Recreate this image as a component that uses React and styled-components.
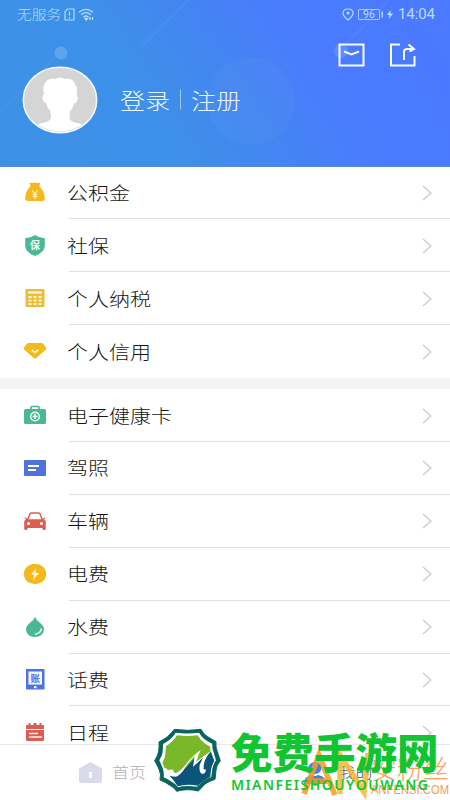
import React from 'react';
import styled, { createGlobalStyle } from 'styled-components';

const GlobalStyle = createGlobalStyle`
  * {
    box-sizing: border-box;
  }
  body {
    margin: 0;
    background: #ffffff;
    font-family: 'Noto Sans CJK SC', 'Noto Sans', sans-serif;
  }
  svg {
    display: block;
    flex: none;
  }
`;

const Screen = styled.div`
  position: relative;
  display: flex;
  flex-direction: column;
  width: 450px;
  height: 800px;
  overflow: hidden;
  background: #ffffff;
`;

const Header = styled.header`
  position: relative;
  flex: none;
  height: 166.5px;
  border-bottom: 1px solid #5688d8;
  background: linear-gradient(58deg, #3c91e5 0%, #3e90e8 34%, #4484f3 53%, #4a7bfe 70%, #4b79ff 100%);
`;

const HeaderArt = styled.svg`
  position: absolute;
  top: 0;
  left: 0;
`;

const StatusBar = styled.div`
  position: relative;
  display: flex;
  align-items: center;
  justify-content: space-between;
  height: 28px;
  padding: 0 14px 0 17px;
  color: #b9dcfa;
`;

const StatusGroup = styled.div`
  display: flex;
  align-items: center;
  gap: ${({ gap }) => gap}px;
`;

const Carrier = styled.span`
  font-size: 14.8px;
  font-weight: 300;
  line-height: 20px;
  transform: scaleY(0.88);
`;

const Battery = styled.span`
  width: 22px;
  height: 11px;
  border: 1px solid #a9c4fb;
  border-radius: 1px;
  font: 10.5px/9px Roboto, sans-serif;
  text-align: center;
`;

const Clock = styled.span`
  width: 38px;
  font: 15px/18px Roboto, sans-serif;
  letter-spacing: -0.1px;
`;

const Actions = styled.div`
  position: relative;
  display: flex;
  justify-content: flex-end;
  gap: 24px;
  padding: 15px 34px 0 0;
`;

const Profile = styled.div`
  position: relative;
  display: flex;
  align-items: center;
  margin-top: -1px;
  padding-left: 22px;
`;

const Account = styled.div`
  display: flex;
  align-items: center;
  margin: -2px 0 0 22px;
  color: #ecf8ff;
  font-size: 25px;
  font-weight: 300;
  line-height: 30px;
  transform: scaleY(0.88);
`;

const AccountDivider = styled.i`
  width: 1px;
  height: 23px;
  margin: 0 10px;
  background: #9bc7f8;
`;

const List = styled.main`
  flex: 1;
  min-height: 0;
  overflow: hidden;
  background: #f3f3f4;
`;

const Group = styled.section`
  margin-bottom: 11px;
  background: #ffffff;
`;

const Row = styled.div`
  display: flex;
  height: 52.9px;
`;

const RowIcon = styled.div`
  display: flex;
  align-items: center;
  justify-content: center;
  width: 69px;
`;

const RowBody = styled.div`
  flex: 1;
  display: flex;
  align-items: center;
  justify-content: space-between;
  padding-right: 17px;
  background: ${({ $last }) =>
    $last ? 'none' : 'linear-gradient(#dfdfe2, #dfdfe2) 0 100% / 100% 1px no-repeat'};
`;

const RowLabel = styled.span`
  margin: -2px 0 0 -2px;
  color: #161616;
  font-size: 21px;
  font-weight: 300;
  line-height: 28px;
  transform: scaleY(0.89);
`;

const TabBar = styled.nav`
  display: grid;
  grid-template-columns: 1fr 1fr;
  flex: none;
  height: 56px;
  border-top: 1px solid #e7e7ea;
  background: #ffffff;
`;

const Tab = styled.div`
  display: flex;
  align-items: center;
  justify-content: center;
  gap: ${({ $active }) => ($active ? 12 : 10)}px;
  color: ${({ $active }) => ($active ? '#3f5680' : '#b1b1b6')};
  font-size: 17px;
  font-weight: 300;

  span {
    transform: translateY(-1px) scaleY(0.9);
  }
`;

const Watermark = styled.svg`
  position: absolute;
  left: 140px;
  top: 715px;
`;

const GOLD = '#f4b91d';
const GREEN = '#4ab894';
const BLUE = '#4f72dc';
const RED = '#dd5e51';

const icons = {
  fund: (
    <>
      <path d="M7 2.500Q5.500 1 7.300.8q1.500.6 2.600 0 1.600-.8 3.200 0 1.600.6 3.100 0 2 0 .6 1.700l-1 1.200H8.200ZM7.800 4.200h8c3.200 2 5.400 6.600 6 11 .3 2.400-.8 3.800-3 3.800H5.200c-2.200 0-3.400-1.400-3-3.800.5-4.400 2.500-9 5.600-11Z" fill={GOLD} />
      <path d="M7.500 3h9v2h-9Z" fill={GOLD} />
      <path d="m9.300 8.500 2.700 3.500 2.700-3.500M12 12v5M9.600 12.500h4.800M9.600 14.500h4.800" stroke="#fff6c8" strokeWidth="1.200" fill="none" />
    </>
  ),
  social: (
    <>
      <path d="M12 0q4 3 9.800 3.200v7.300c0 5-4.300 8.300-9.800 10.500C6.500 18.800 2.200 15.500 2.200 10.500V3.200Q8 3 12 0Z" fill={GREEN} />
      <text x="12" y="13.800" textAnchor="middle" fontSize="10" fontWeight="700" fill="#effff8">保</text>
    </>
  ),
  tax: (
    <>
      <rect x="2.500" y="1" width="19" height="18" rx="1" fill="#e9bd3a" />
      <path d="M5 4.500h14" stroke="#fff8dd" strokeWidth="2" />
      <path d="M5.500 9h14M5.500 12.500h14M5.500 16h14" stroke="#fff8dd" strokeWidth="2" strokeDasharray="3 2" />
    </>
  ),
  credit: (
    <>
      <path d="M5.500 2h13q1 0 1.600.8l3 4q.7 1-.2 1.800l-9.700 8.300q-1.200 1-2.400 0L1.100 8.600Q.2 7.800.9 6.800l3-4Q4.500 2 5.500 2Z" fill={GOLD} />
      <path d="m8.700 9 3.300 2.400L15.300 9" stroke="#fff5c8" strokeWidth="1.700" fill="none" />
    </>
  ),
  health: (
    <>
      <path d="M8 4.500v-2q0-1 1-1h6q1 0 1 1v2" stroke={GREEN} strokeWidth="1.700" fill="none" />
      <rect x="1" y="4" width="22" height="15" rx="1.500" fill={GREEN} />
      <circle cx="12" cy="11.500" r="4.300" fill="none" stroke="#e4fff4" strokeWidth="1.500" />
      <path d="M12 9v5M9.500 11.500h5" stroke="#e4fff4" strokeWidth="1.700" />
    </>
  ),
  license: (
    <>
      <rect x="1" y="2" width="22" height="16" rx="1" fill={BLUE} />
      <path d="M5 8h11M5 12h8" stroke="#ffffff" strokeWidth="2" />
    </>
  ),
  car: (
    <>
      <path d="M4.500 9 7.200 2.500Q7.600 2 8.500 2h7q.9 0 1.300.5L19.500 9" fill="none" stroke={RED} strokeWidth="1.500" />
      <path d="M4 8.200h16q2.800.4 2.800 3V18q0 1-1.500 1t-1.800-1v-1H4.500v1q0 1-1.600 1t-1.700-1v-6.800Q1.200 8.600 4 8.200ZM1 6.500 4 7l-.5 2M23 6.500 20 7l.5 2" fill={RED} />
      <circle cx="5.500" cy="12.500" r="1.500" fill="#fff" />
      <circle cx="18.500" cy="12.500" r="1.500" fill="#fff" />
    </>
  ),
  power: (
    <>
      <ellipse cx="12" cy="10" rx="11.200" ry="10.200" fill={GOLD} />
      <path d="m13 4.500-5 6.300h3.300L10 16l6-7h-3.500Z" fill="#fff7dc" />
    </>
  ),
  water: (
    <>
      <path d="M12 0q1.300 3 4.700 5.500Q21 9 21 12C21 17 17 20 12 20s-9-3-9-8Q3 9 7.300 5.500 10.700 3 12 0Z" fill={GREEN} />
      <path d="M18.300 11.500q0 4.500-6.300 5.700" stroke="#e8fff5" strokeWidth="1.500" fill="none" />
    </>
  ),
  phone: (
    <>
      <rect x="3" y="0" width="18.500" height="20.500" fill={BLUE} />
      <rect x="5.500" y="2.500" width="13.500" height="13" fill="#f6f8ff" />
      <text x="12.200" y="12.500" textAnchor="middle" fontSize="9.500" fontWeight="700" fill={BLUE}>账</text>
      <path d="M11 18.200h2.500" stroke="#fff" strokeWidth="2" />
    </>
  ),
  calendar: (
    <>
      <path d="M3 3h2.500V1h2v2h3V1h3v2h3V1h2v2H21v4H3ZM3 8h18v10q0 1-1 1H4q-1 0-1-1Z" fill={RED} />
      <path d="M6 11.500h9M6 15h13" stroke="#fff0ed" strokeWidth="1.500" />
    </>
  ),
};

const MENU = [
  [
    { icon: 'fund', label: '公积金' },
    { icon: 'social', label: '社保' },
    { icon: 'tax', label: '个人纳税' },
    { icon: 'credit', label: '个人信用' },
  ],
  [
    { icon: 'health', label: '电子健康卡' },
    { icon: 'license', label: '驾照' },
    { icon: 'car', label: '车辆' },
    { icon: 'power', label: '电费' },
    { icon: 'water', label: '水费' },
    { icon: 'phone', label: '话费' },
    { icon: 'calendar', label: '日程' },
  ],
];

const Avatar = () => (
  <svg width="76" height="68" viewBox="0 0 76 68">
    <defs>
      <clipPath id="face">
        <ellipse cx="38" cy="34" rx="35.500" ry="31.500" />
      </clipPath>
    </defs>
    <ellipse cx="38" cy="34" rx="36.500" ry="32.500" fill="#d5d5d5" />
    <path
      clipPath="url(#face)"
      d="M9 62q5-4 15-6 4-1 5-4l-.5-7q-3.500-3-4.500-8-3-1-3.500-5-.2-3 1.500-4-2-9 2-12 2-4 9-3 5-3 10 0 8-1 10 5 3 3 1.500 11 2 1 1 4-.5 4-3.500 4.500-1 5-4 8l-.5 7q1 3 6 4 10 2 14 6v8H9Z"
      fill="#ffffff"
    />
    <ellipse cx="38" cy="34" rx="36.700" ry="32.700" fill="none" stroke="#f4fdff" strokeWidth="1.500" />
  </svg>
);

const Art = () => (
  <HeaderArt width="450" height="166" viewBox="0 0 450 166">
    <path d="M0 113 58 55M141 47 188 0M345 45 390 0" stroke="#7bb5f6" opacity=".28" />
    <circle cx="61" cy="53" r="6.500" fill="#69aaf0" opacity=".75" />
    <circle cx="251" cy="101" r="44" fill="#6ba7ee" opacity=".12" />
    <circle cx="341" cy="51" r="7" fill="#84a7ff" opacity=".4" />
  </HeaderArt>
);

// The mountain badge is drawn on a 255x240 grid
const Badge = () => (
  <g transform="translate(5 5) scale(.3333)">
    <path
      d="M88 28q40 6 80 0 8 16 20 22 13 8 25 15-2 17 4 30 4 13 9 27-12 14-13 28-1 14-3 28-18 6-30 14-8 10-20 21-16-4-32-4-18 0-33 5-8-12-20-18-14-10-30-16 4-16-2-30-6-14-14-28 10-14 12-28 2-14 1-28 14-8 26-16 12-12 20-22Z"
      fill="#07635c"
      stroke="#07635c"
      strokeWidth="3"
      strokeLinejoin="round"
    />
    <path
      d="M92 38q36 5 70 0 8 14 20 22 10 6 20 11-1 14 4 26 3 12 7 24-9 13-11 25l-3 25q-15 5-27 13-8 10-16 16-14-2-28-2-16 0-29 4-8-12-19-17-12-8-24-13 2-14-3-28-5-12-10-23 8-13 10-25 1-12 1-24 12-6 22-14 10-10 16-20Z"
      fill="#ffffff"
    />
    <path d="M96 46q32 4 62 0 10 17 21 24 8 5 17 10-1 10 2 18-30 12-60 42-25 24-72 20-5-5-7-14-3-10-7-18 8-12 9-25l2-25q21-12 33-32Z" fill="#79b929" />
    <path d="M70 163q45-5 68-37l20-20-6 27q25-25 46-38 6 16 10 28-9 15-10 27l-2 21q-20 8-38 26-32-6-60 2-10-17-28-36Z" fill="#0b557b" />
    <path d="M57 143q8 0 12 8 8-4 16-2-2 7 6 10 20-6 39-36 16-18 37-33-8 16-14 40 24-25 46-37-25 25-23 54 4 4 7 1-1 14-10 14-12-2-9-27l11-25q-13 13-31 31l5-34-22 26q-14 26-30 36-6 2-17 0-20-3-23-26Z" fill="#ffffff" />
  </g>
);

const App = () => {
  const renderRow = (item, index, items) => (
    <Row key={item.label}>
      <RowIcon>
        <svg width="24" height="21" viewBox="0 0 24 21">
          {icons[item.icon]}
        </svg>
      </RowIcon>
      <RowBody $last={index === items.length - 1}>
        <RowLabel>{item.label}</RowLabel>
        <svg width="12" height="16" viewBox="0 0 12 16" fill="none">
          <path d="m2 1 8 7-8 7" stroke="#c9c9cc" strokeWidth="1.200" />
        </svg>
      </RowBody>
    </Row>
  );

  return (
    <Screen>
      <GlobalStyle />
      <Header>
        <Art />
        <StatusBar>
          <StatusGroup gap={3}>
            <Carrier>无服务</Carrier>
            <svg width="11" height="13" viewBox="0 0 11 13" fill="none" stroke="currentColor" strokeWidth="1.200">
              <path d="M3.500 1H10v11H1V3.500ZM5.500 3.500v4M5.500 9v1.500" />
            </svg>
            <svg width="17" height="13" viewBox="0 0 17 13" fill="none" stroke="currentColor" strokeWidth="1.300">
              <path d="M1 4.200q7-5.500 14 0M3.200 6.700q4.800-4 9.600 0M5.500 9q2.500-2 5 0" />
              <path d="M7 10.500h2.500L8.200 12ZM12 9v3M14.500 9v3" />
            </svg>
          </StatusGroup>
          <StatusGroup gap={4}>
            <svg width="12" height="13" viewBox="0 0 12 13" fill="none" stroke="currentColor" strokeWidth="1.200">
              <path d="M6 12Q1 8 1 5.300 1 1 6 1t5 4.300Q11 8 6 12Z" />
              <circle cx="6" cy="5" r="1" fill="currentColor" />
            </svg>
            <Battery>96</Battery>
            <svg width="10" height="11" viewBox="1 0 10 11" fill="currentColor" overflow="visible">
              <path d="M-1.500 2.500h1.400v6h-1.400ZM7.500 1 4 6h2.300L6 10l4-5.500H7.500Z" />
            </svg>
            <Clock>14:04</Clock>
          </StatusGroup>
        </StatusBar>
        <Actions>
          <svg width="27" height="24" viewBox="0 0 27 24" fill="none" stroke="#f7fcff" strokeWidth="2">
            <path d="M1.500 1.500h24v21h-24ZM6 8.500l7.500 3 7.500-3" />
          </svg>
          <svg width="27" height="24" viewBox="0 0 27 24" fill="none" stroke="#f7fcff" strokeWidth="2">
            <path d="M11 1.500H2v21h23.500V13M15 17V8.500Q15 6 18 6h7M19.500 1.500 25 6l-4.500 2.500" />
          </svg>
        </Actions>
        <Profile>
          <Avatar />
          <Account>
            <span>登录</span>
            <AccountDivider />
            <span>注册</span>
          </Account>
        </Profile>
      </Header>
      <List>
        {MENU.map(items => (
          <Group key={items[0].label}>{items.map(renderRow)}</Group>
        ))}
      </List>
      <TabBar>
        <Tab>
          <svg width="23" height="21" viewBox="0 0 23 21">
            <path d="M11.500 0 23 6.500V19q0 2-2 2H2q-2 0-2-2V6.500Z" fill="#dadaea" />
            <path d="M11.500 10v6" stroke="#fff" strokeWidth="3" />
          </svg>
          <span>首页</span>
        </Tab>
        <Tab $active>
          <svg width="24" height="22" viewBox="0 0 24 22" fill="#3d7fee">
            <ellipse cx="12" cy="6" rx="6.500" ry="6" />
            <path d="M1 22q0-8 8-9 3 2 6 0 8 1 8 9Z" />
          </svg>
          <span>我的</span>
        </Tab>
      </TabBar>
      <Watermark width="310" height="85" viewBox="0 0 310 85">
        <g opacity=".85" fill="none" strokeWidth="5.500">
          <path d="m164 79 15-39 16 40M168 66h21" stroke="#f79b20" />
          <path d="M200 79V40l24 37 4-39" stroke="#f7b836" />
        </g>
        <text x="231" y="64" fontSize="26" fontWeight="300" fill="#f6a05b">安粉丝</text>
        <text x="231" y="79" fontFamily="Liberation Sans, sans-serif" fontSize="12" fill="#f59a50" textLength="78" lengthAdjust="spacingAndGlyphs">
          ANFENSI.COM
        </text>
        <Badge />
        <text x="91" y="54" fontSize="41.500" fontWeight="900" fill="#10c432">免费手游网</text>
        <text x="91" y="74.500" fontFamily="Noto Sans, sans-serif" fontSize="14" fontWeight="600" fill="#12c82d" textLength="197">
          MIANFEISHOUYOUWANG
        </text>
      </Watermark>
    </Screen>
  );
};

export default App;
